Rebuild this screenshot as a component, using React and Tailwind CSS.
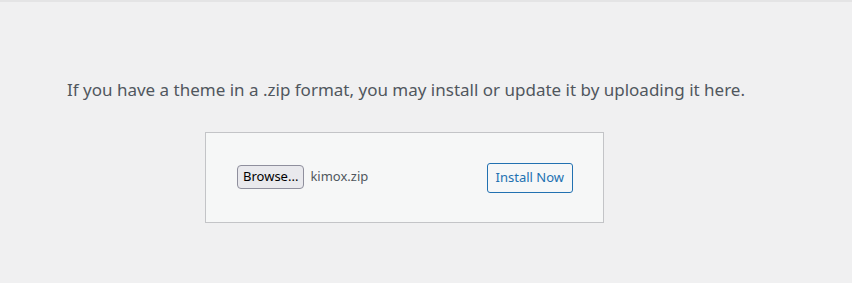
import React from 'react';

const App = () => {
    return (
        <div className="min-h-[283px] bg-[#f0f0f1] border-t-2 border-[#e4e4e5] font-['Noto_Sans',sans-serif]">
            <p className="pl-[67px] pt-[75px] text-[17px] leading-[26px] text-[#50575e]">
                If you have a theme in a .zip format, you may install or update it by uploading it here.
            </p>
            <div className="ml-[205px] mt-[29px] w-[399px] h-[91px] border border-[#c3c4c7] bg-[#f6f7f7] pl-[31px] pr-[30px] flex items-center justify-between">
                <div className="flex items-center gap-[6px] mt-[-2px]">
                    <button className="h-[24px] px-[5px] border border-[#8f8f9d] rounded-[4px] bg-[#e9e9ed] text-[13px] text-black font-['Noto_Sans',sans-serif]">
                        Browse...
                    </button>
                    <span className="text-[13px] text-[#50575e]">kimox.zip</span>
                </div>
                <button className="h-[30px] px-[8px] border border-[#2271b1] rounded-[3px] text-[13px] text-[#2271b1]">
                    Install Now
                </button>
            </div>
        </div>
    );
};

export default App;
